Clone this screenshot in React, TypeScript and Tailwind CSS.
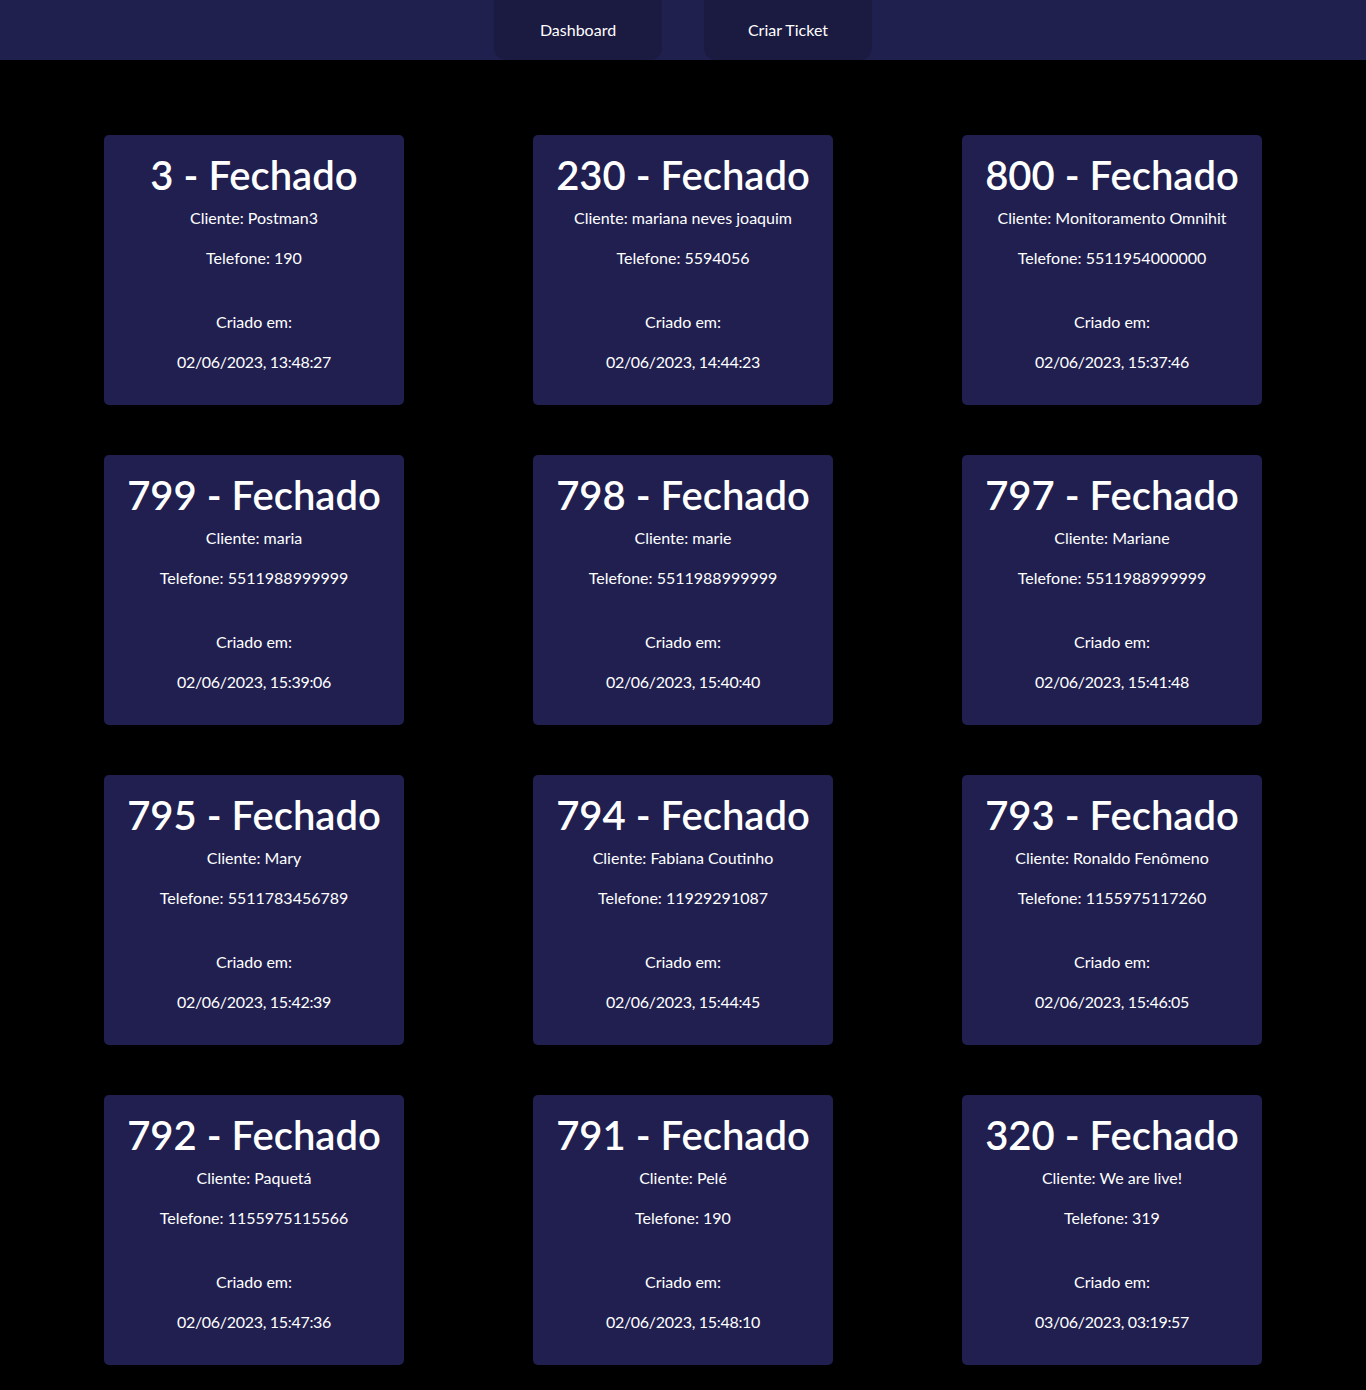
import * as React from "react";

const tickets = [
  { id: 3, cliente: "Postman3", telefone: "190", criado: "02/06/2023, 13:48:27" },
  { id: 230, cliente: "mariana neves joaquim", telefone: "5594056", criado: "02/06/2023, 14:44:23" },
  { id: 800, cliente: "Monitoramento Omnihit", telefone: "5511954000000", criado: "02/06/2023, 15:37:46" },
  { id: 799, cliente: "maria", telefone: "5511988999999", criado: "02/06/2023, 15:39:06" },
  { id: 798, cliente: "marie", telefone: "5511988999999", criado: "02/06/2023, 15:40:40" },
  { id: 797, cliente: "Mariane", telefone: "5511988999999", criado: "02/06/2023, 15:41:48" },
  { id: 795, cliente: "Mary", telefone: "5511783456789", criado: "02/06/2023, 15:42:39" },
  { id: 794, cliente: "Fabiana Coutinho", telefone: "11929291087", criado: "02/06/2023, 15:44:45" },
  { id: 793, cliente: "Ronaldo Fenômeno", telefone: "1155975117260", criado: "02/06/2023, 15:46:05" },
  { id: 792, cliente: "Paquetá", telefone: "1155975115566", criado: "02/06/2023, 15:47:36" },
  { id: 791, cliente: "Pelé", telefone: "190", criado: "02/06/2023, 15:48:10" },
  { id: 320, cliente: "We are live!", telefone: "319", criado: "03/06/2023, 03:19:57" },
];

const TicketCard = ({ item }) => {
  return (
    <div className="w-[300px] h-[270px] rounded-[5px] bg-[#201f4f] text-white text-center pt-[16px]">
      <h1 className="text-[40px] leading-[48px] font-semibold">{item.id} - Fechado</h1>
      <p className="mt-[7px] leading-6">Cliente: {item.cliente}</p>
      <p className="mt-4 leading-6">Telefone: {item.telefone}</p>
      <p className="mt-10 leading-6">Criado em:</p>
      <p className="mt-4 leading-6 tracking-[-0.3px]">{item.criado}</p>
    </div>
  );
};

export default function App() {
  return (
    <div className="min-h-[1390px] bg-black font-['Lato','Open_Sans',sans-serif] text-base">
      <header className="h-[60px] bg-[#20204f] flex justify-center gap-[42px]">
        <button className="w-[168px] h-[60px] rounded-b-xl bg-[#1b1a41] text-white">Dashboard</button>
        <button className="w-[168px] h-[60px] rounded-b-xl bg-[#1b1a41] text-white">Criar Ticket</button>
      </header>
      <main className="grid grid-cols-[300px_300px_300px] justify-center gap-x-[129px] gap-y-[50px] pt-[75px]">
        {tickets.map((item) => (
          <TicketCard key={item.id} item={item} />
        ))}
      </main>
    </div>
  );
}
